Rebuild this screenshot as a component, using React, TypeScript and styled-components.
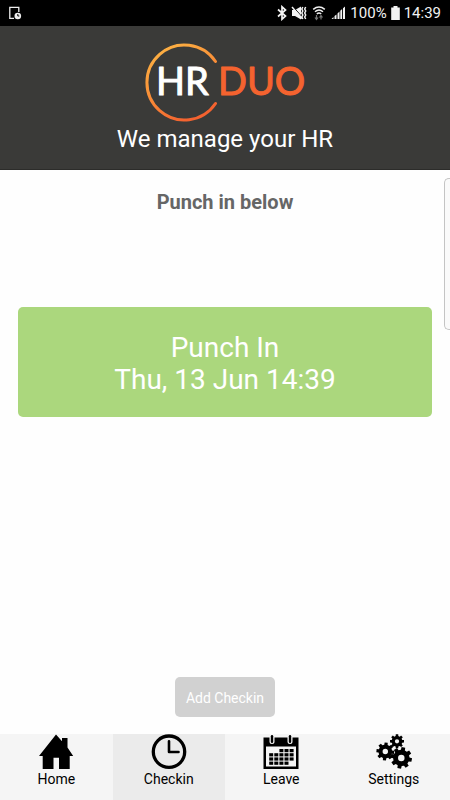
import React from "react";
import styled, { createGlobalStyle } from "styled-components";

const GlobalStyle = createGlobalStyle`
  *, *::before, *::after { box-sizing: border-box; }
  body { margin: 0; background: #fff; font-family: Roboto, "Open Sans", sans-serif; }
`;

const Screen = styled.div`
  position: relative;
  display: flex;
  flex-direction: column;
  min-height: 100vh;
  overflow: hidden;
  background: #fefefe;
`;

const StatusBar = styled.div`
  display: flex;
  align-items: center;
  justify-content: space-between;
  height: 26px;
  padding: 0 9px 0 8px;
  background: #000;
  color: #f2f2f2;
  font-size: 15px;
  line-height: 26px;
`;

const StatusGroup = styled.div`
  display: flex;
  align-items: center;
  gap: 4px;
  svg { display: block; }
`;

const Header = styled.header`
  display: flex;
  flex-direction: column;
  align-items: center;
  height: 144px;
  padding-top: 16px;
  background: #3a3a38;
  border-bottom: 1px solid #2c2c2a;
`;

const Tagline = styled.p`
  margin: 0;
  color: #fff;
  font-size: 24px;
  line-height: 30px;
`;

const Main = styled.main`
  flex: 1;
  display: flex;
  flex-direction: column;
  align-items: center;
  padding: 18px 18px 17px;
`;

const Title = styled.h1`
  margin: 0;
  color: #666;
  font-size: 20px;
  line-height: 28px;
  font-weight: 700;
`;

const Button = styled.button`
  border: 0;
  border-radius: 5px;
  color: #fff;
  font-family: inherit;
`;

const PunchButton = styled(Button)`
  width: 100%;
  margin-top: 91px;
  padding: 25px 16px 21px;
  background: #abd77d;
  font-size: 28px;
  line-height: 32px;
`;

const PunchLine = styled.span`
  display: block;
`;

const AddButton = styled(Button)`
  height: 40px;
  margin-top: auto;
  padding: 2px 11px 0;
  background: #d1d1d1;
  font-size: 14px;
`;

const EdgeHandle = styled.div`
  position: absolute;
  top: 178px;
  right: 0;
  width: 6px;
  height: 152px;
  border: 1px solid #c4c4c4;
  border-right: 0;
  border-radius: 5px 0 0 5px;
  background: #fafafa;
`;

const TabBar = styled.nav`
  display: grid;
  grid-template-columns: repeat(4, 1fr);
  height: 66px;
`;

const Tab = styled.a<{ $active?: boolean }>`
  display: flex;
  flex-direction: column;
  align-items: center;
  background: ${(p) => (p.$active ? "#ebebeb" : "#f5f5f5")};
  color: #000;
  font-size: 14px;
  line-height: 18px;
  text-decoration: none;
  svg { display: block; }
`;

const Logo = () => (
  <svg width="162" height="82" viewBox="0 0 162 82" role="img" aria-label="HR DUO">
    <defs>
      <linearGradient id="ring" x1="0.1" y1="0" x2="0.6" y2="1">
        <stop offset="0" stopColor="#fdb645" />
        <stop offset="0.45" stopColor="#f99439" />
        <stop offset="1" stopColor="#f4622f" />
      </linearGradient>
    </defs>
    <path d="M71.500 19.500A37.500 37.500 0 1 0 71.500 61.500" fill="none" stroke="url(#ring)" strokeWidth="3" strokeLinecap="round" />
    <g fontFamily="Lato, sans-serif" fontSize="38" strokeLinejoin="round" strokeWidth="1">
      <text x="12" y="53" fill="#fff" stroke="#fff">HR</text>
      <text x="74" y="53" fill="#f4632f" stroke="#f4632f">DUO</text>
    </g>
  </svg>
);

const DeviceIcon = () => (
  <svg width="14" height="16" viewBox="0 0 14 16" fill="none" stroke="#eee" strokeWidth="1.300">
    <path d="M6 13.400H1.800V2.300H10.800V7" />
    <circle cx="9.800" cy="11" r="3.300" fill="#eee" stroke="none" />
    <path d="M9.800 9v2h1.500" stroke="#000" strokeWidth="1" />
  </svg>
);

const BluetoothIcon = () => (
  <svg width="10" height="16" viewBox="0 0 10 16" fill="none" stroke="#f2f2f2" strokeWidth="1.700">
    <path d="M1 4.500L8.500 11L5 14.200V1.800L8.500 5L1 11.500" />
  </svg>
);

const MuteIcon = () => (
  <svg width="16" height="16" viewBox="0 0 16 16" fill="none" stroke="#f2f2f2">
    <path d="M1 5H4L10 1.500V14.500L4 11H1Z" fill="#f2f2f2" stroke="none" />
    <path d="M2 1.500L12 13" stroke="#000" strokeWidth="1" />
    <path d="M1 2L11 13.500" strokeWidth="1.500" />
    <path d="M11.800 2l-1 2 1 2-1 2 1 2-1 2 1 2M14.700 2l-1 2 1 2-1 2 1 2-1 2 1 2" strokeWidth="1.500" />
  </svg>
);

const WifiIcon = () => (
  <svg width="16" height="16" viewBox="0 0 14 16" fill="none" stroke="#f2f2f2" strokeWidth="1.500">
    <path d="M1.200 4.300Q7-.3 12.800 4.300M3 6.800Q7 3.300 11 6.800M4.800 9Q7 7.200 9.200 9" />
    <path d="M4.500 10v4M3 12.500l1.500 2L6 12.500M9 14.500v-4M7.500 12.500L9 10.500l1.500 2" stroke="#777" strokeWidth="1.200" />
  </svg>
);

const SignalIcon = () => (
  <svg width="15" height="16" viewBox="0 0 15 16" fill="#f2f2f2">
    <path d="M.5 14L2.500 12V14ZM3.500 11L5.500 9.500V14H3.500ZM6.500 8.500L8.500 6.500V14H6.500ZM9.300 5.700L11.100 4V14H9.300ZM12 3.200L14 1.500V14H12Z" />
  </svg>
);

const BatteryIcon = () => (
  <svg width="9" height="16" viewBox="0 0 9 16" fill="#f2f2f2">
    <path d="M2.500 1h4v1.500h2.300V15H.2V2.500h2.300z" />
  </svg>
);

const HomeIcon = () => (
  <svg width="36" height="36" viewBox="0 0 36 36">
    <path d="M18 .5L24 7.300V4H29.500V13.500L35.200 22H31.700V35H21V23.700H15.500V35H4.700V22H1Z" />
  </svg>
);

const ClockIcon = () => (
  <svg width="36" height="36" viewBox="0 0 36 36" fill="none" stroke="#000">
    <circle cx="18" cy="17.700" r="15.700" strokeWidth="3.300" />
    <path d="M18 7.200V18H27.500" strokeWidth="2.600" strokeLinecap="round" strokeLinejoin="round" />
  </svg>
);

const cellRows = [[2, 3, 4], [0, 1, 2, 3, 4], [0, 1, 2, 3, 4], [0, 1, 2, 3]];

const CalendarIcon = () => (
  <svg width="36" height="36" viewBox="0 0 36 36">
    <path d="M.5 3.500H35.500V35H.5ZM3 12.500V32.500H33V12.500Z" fillRule="evenodd" />
    {[9, 27].map((x) => (
      <g key={x}>
        <rect x={x - 2.500} y="0" width="5" height="10" rx="2.500" fill="#f5f5f5" />
        <rect x={x - 1.200} y="1" width="2.400" height="8" rx="1.200" />
      </g>
    ))}
    {cellRows.map((row, r) =>
      row.map((c) => <rect key={`${r}-${c}`} x={6.200 + c * 5.100} y={15 + r * 4.200} width="4" height="3.200" />)
    )}
  </svg>
);

function gearPath(cx: number, cy: number, outer: number, turn: number) {
  const teeth = 8;
  const root = outer * 0.76;
  const step = (Math.PI * 2) / teeth;
  const points: string[] = [];
  for (let i = 0; i < teeth; i++) {
    const a = i * step + turn;
    [[-0.32, root], [-0.22, outer], [0.22, outer], [0.32, root]].forEach(([offset, radius]) => {
      const angle = a + offset * step;
      points.push(`${(cx + Math.cos(angle) * radius).toFixed(2)} ${(cy + Math.sin(angle) * radius).toFixed(2)}`);
    });
  }
  const hole = outer * 0.3;
  return `M${points.join("L")}ZM${cx - hole} ${cy}a${hole} ${hole} 0 1 0 ${hole * 2} 0a${hole} ${hole} 0 1 0 ${-hole * 2} 0Z`;
}

const GearsIcon = () => (
  <svg width="36" height="36" viewBox="0 0 36 36" fillRule="evenodd">
    <path d={gearPath(25.300, 23.900, 10.800, 0.2)} />
    <path d={gearPath(9.300, 17.500, 9, 0.1)} />
    <path d={gearPath(21, 7.300, 7.100, 0)} />
  </svg>
);

const tabs = [
  { label: "Home", Icon: HomeIcon },
  { label: "Checkin", Icon: ClockIcon, active: true },
  { label: "Leave", Icon: CalendarIcon },
  { label: "Settings", Icon: GearsIcon },
];

export default function App() {
  return (
    <Screen>
      <GlobalStyle />
      <StatusBar>
        <DeviceIcon />
        <StatusGroup>
          <BluetoothIcon />
          <MuteIcon />
          <WifiIcon />
          <SignalIcon />
          <span>100%</span>
          <BatteryIcon />
          <span>14:39</span>
        </StatusGroup>
      </StatusBar>
      <Header>
        <Logo />
        <Tagline>We manage your HR</Tagline>
      </Header>
      <Main>
        <Title>Punch in below</Title>
        <PunchButton type="button">
          <PunchLine>Punch In</PunchLine>
          <PunchLine>Thu, 13 Jun 14:39</PunchLine>
        </PunchButton>
        <AddButton type="button">Add Checkin</AddButton>
      </Main>
      <TabBar>
        {tabs.map(({ label, Icon, active }) => (
          <Tab key={label} href={`#${label.toLowerCase()}`} $active={active} aria-current={active ? "page" : undefined}>
            <Icon />
            {label}
          </Tab>
        ))}
      </TabBar>
      <EdgeHandle />
    </Screen>
  );
}
